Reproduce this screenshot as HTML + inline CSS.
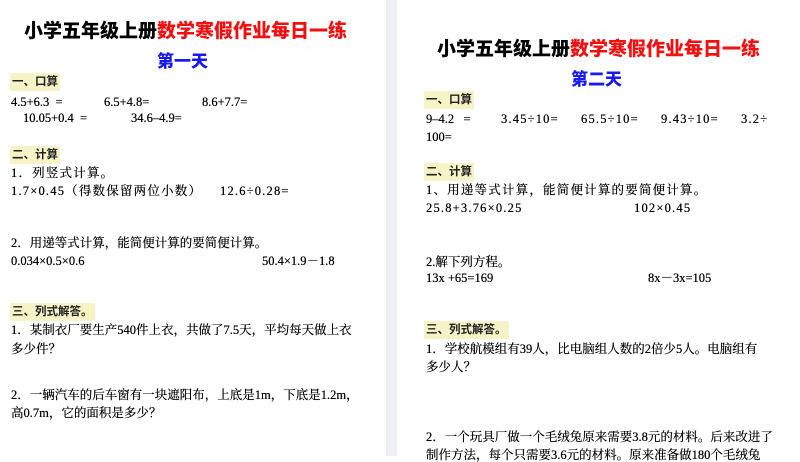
<!DOCTYPE html>
<html><head><meta charset="utf-8"><style>
body{margin:0;width:800px;height:456px;overflow:hidden;background:#fff;position:relative;font-family:"Liberation Serif","Noto Serif CJK SC",serif;color:#000}
.g{position:absolute;left:386px;top:0;width:11px;height:456px;background:#eef0f5}
.t{position:absolute;white-space:nowrap;font-size:12.5px;line-height:14px;text-shadow:0 0 0.4px #000}
.h{position:absolute;white-space:nowrap;font-family:"Liberation Sans","Noto Sans CJK SC",sans-serif;font-weight:900;font-size:19px;line-height:22px}
.r{color:#f01010}
.d{position:absolute;white-space:nowrap;font-family:"Liberation Sans","Noto Sans CJK SC",sans-serif;font-weight:900;font-size:17px;color:#1a1af0;line-height:20px}
.s{position:absolute;white-space:nowrap;font-family:"Liberation Sans","Noto Sans CJK SC",sans-serif;font-weight:bold;font-size:11.5px;background:#f6f3c6;padding:2px 2px;line-height:14px;color:#222}
.c{letter-spacing:1.2px}
.w{font-size:12.5px;letter-spacing:0}
</style></head><body>
<div class="g"></div>
<!-- left page -->
<div class="h" style="left:24px;top:21px">小学五年级上册<span class="r">数学寒假作业每日一练</span></div>
<div class="d" style="left:157px;top:52px">第一天</div>
<div class="s" style="left:10px;top:73px">一、口算</div>
<div class="t" style="left:11px;top:95px">4.5+6.3 &nbsp;=</div>
<div class="t" style="left:104px;top:95px">6.5+4.8=</div>
<div class="t" style="left:202px;top:95px">8.6+7.7=</div>
<div class="t" style="left:23px;top:111px">10.05+0.4 &nbsp;=</div>
<div class="t" style="left:131px;top:111px">34.6–4.9=</div>
<div class="s" style="left:10px;top:146px">二、计算</div>
<div class="t c" style="left:11px;top:166px">1．列竖式计算。</div>
<div class="t c" style="left:11px;top:184px">1.7×0.45（得数保留两位小数）</div>
<div class="t c" style="left:220px;top:184px">12.6÷0.28=</div>
<div class="t" style="left:11px;top:236px">2．用递等式计算，能简便计算的要简便计算。</div>
<div class="t" style="left:11px;top:254px">0.034×0.5×0.6</div>
<div class="t" style="left:262px;top:254px">50.4×1.9－1.8</div>
<div class="s" style="left:10px;top:303px">三、列式解答。</div>
<div class="t w" style="left:11px;top:323px">1．某制衣厂要生产540件上衣，共做了7.5天，平均每天做上衣</div>
<div class="t w" style="left:11px;top:342px">多少件？</div>
<div class="t w" style="left:11px;top:388px">2．一辆汽车的后车窗有一块遮阳布，上底是1m，下底是1.2m，</div>
<div class="t w" style="left:11px;top:406px">高0.7m，它的面积是多少？</div>
<!-- right page -->
<div class="h" style="left:437px;top:39px">小学五年级上册<span class="r">数学寒假作业每日一练</span></div>
<div class="d" style="left:571px;top:70px">第二天</div>
<div class="s" style="left:424px;top:91px">一、口算</div>
<div class="t" style="left:426px;top:112px">9–4.2 &nbsp;&nbsp;=</div>
<div class="t c" style="left:501px;top:112px">3.45÷10=</div>
<div class="t c" style="left:581px;top:112px">65.5÷10=</div>
<div class="t c" style="left:661px;top:112px">9.43÷10=</div>
<div class="t c" style="left:741px;top:112px">3.2÷</div>
<div class="t" style="left:426px;top:130px">100=</div>
<div class="s" style="left:424px;top:163px">二、计算</div>
<div class="t c" style="left:426px;top:183px">1、用递等式计算，能简便计算的要简便计算。</div>
<div class="t c" style="left:426px;top:201px">25.8+3.76×0.25</div>
<div class="t c" style="left:634px;top:201px">102×0.45</div>
<div class="t" style="left:426px;top:255px">2.解下列方程。</div>
<div class="t" style="left:426px;top:271px">13x +65=169</div>
<div class="t" style="left:648px;top:271px">8x－3x=105</div>
<div class="s" style="left:424px;top:321px">三、列式解答。</div>
<div class="t w" style="left:426px;top:342px">1．学校航模组有39人，比电脑组人数的2倍少5人。电脑组有</div>
<div class="t w" style="left:426px;top:360px">多少人？</div>
<div class="t w" style="left:426px;top:430px">2．一个玩具厂做一个毛绒兔原来需要3.8元的材料。后来改进了</div>
<div class="t w" style="left:426px;top:448px">制作方法，每个只需要3.6元的材料。原来准备做180个毛绒兔</div>
</body></html>
